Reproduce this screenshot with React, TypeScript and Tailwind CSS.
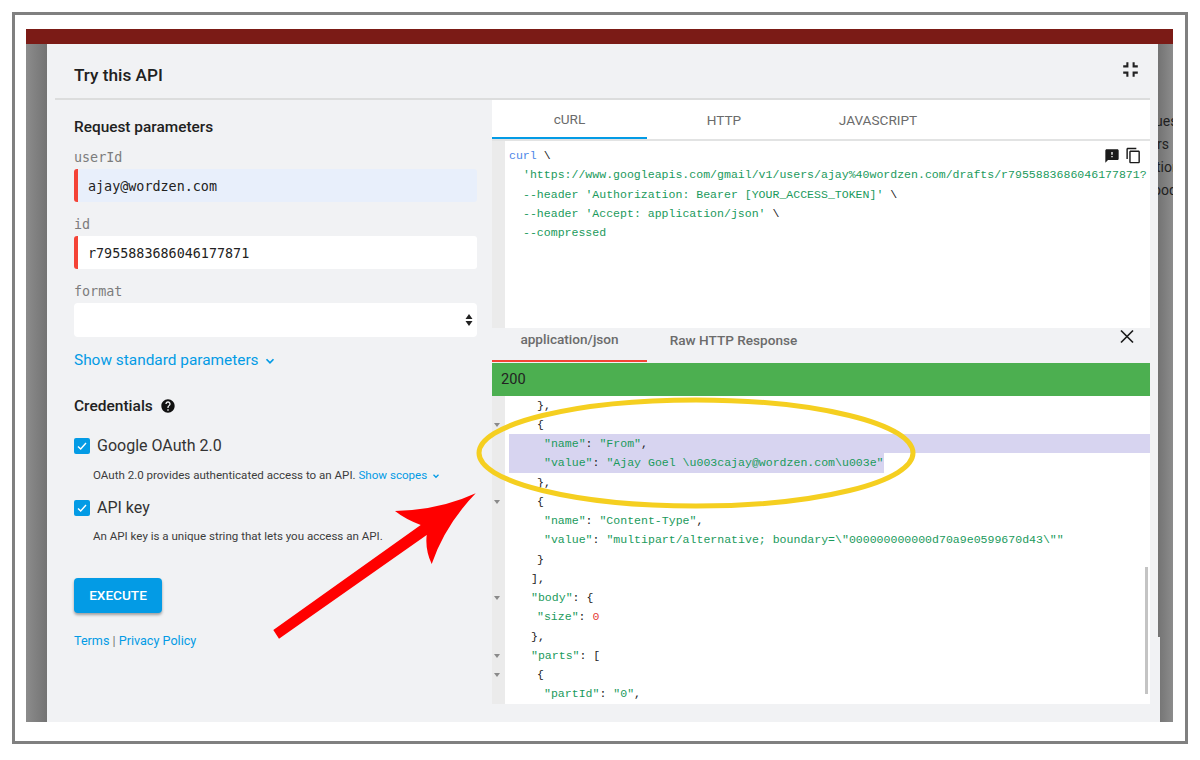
import React from "react";

const mono = "font-['Liberation_Mono',monospace]";
const sansMono = "font-['DejaVu_Sans_Mono',monospace]";

type Tok = { t: string; c?: string };
const G = "text-[#1a9a5c]";
const K = "text-[#222222]";

function CodeLine({ pl, toks, fold }: { pl: string; toks: Tok[]; fold?: boolean }) {
  return (
    <div className={`relative h-[19.25px] leading-[19.25px] whitespace-pre ${pl}`}>
      {fold && <span className="absolute left-[2px] top-[8px] h-0 w-0 border-x-[3px] border-t-[4px] border-x-transparent border-t-[#8a8a8a]" />}
      {toks.map((x, i) => (
        <span key={i} className={x.c ?? K}>{x.t}</span>
      ))}
    </div>
  );
}

function Field({ label, value, tint, marker }: { label: string; value?: string; tint?: boolean; marker?: boolean }) {
  return (
    <div className="mb-[10px]">
      <div className={`${sansMono} h-[24px] pt-[2px] text-[13.4px] leading-[22px] text-[#7c7c7c]`}>{label}</div>
      <div className={`flex h-[33px] w-[403px] items-center rounded-[3px] pt-[4px] ${tint ? "bg-[#e8effb]" : "bg-white"} ${marker ? "border-l-4 border-[#f44336]" : ""} ${sansMono} pl-[10px] text-[13.4px] text-[#222222]`}>
        {value}
      </div>
    </div>
  );
}

function Check({ label }: { label: string }) {
  return (
    <div className="flex h-[18px] items-center">
      <span className="flex h-[16px] w-[16px] items-center justify-center rounded-[2px] bg-[#039be5]">
        <svg width="12" height="12" viewBox="0 0 12 12" fill="none" stroke="#ffffff" strokeWidth="1.4">
          <path d="M2 6.4 L4.7 9 L10 3" />
        </svg>
      </span>
      <span className="ml-[7px] text-[16px] text-[#333333]">{label}</span>
    </div>
  );
}

const Chevron = ({ size }: { size: number }) => (
  <svg width={size} height={size} viewBox="0 0 12 12" fill="none" stroke="#039be5" strokeWidth="1.5">
    <path d="M3 4.5 L6 7.5 L9 4.5" />
  </svg>
);

export default function App() {
  return (
    <div className="relative h-[760px] w-[1200px] overflow-hidden bg-white px-3 pt-3 font-['Roboto',sans-serif]">
      <div className="h-[732px] w-[1176px] border-[3px] border-[#808080] px-[11px] pt-[14px]">
        <div className="flex h-[693px] w-[1147px] flex-col">
          <div className="h-[15px] bg-[#7b1b16]" />
          <div className="flex h-[678px]">
            <div className="w-[21px] bg-gradient-to-r from-[#8c8c8c] to-[#737373]" />
            <div className="w-[1111px] bg-[#f1f2f4] px-2">
              <div className="flex h-[56px] justify-between border-b-2 border-[#dcdddd]">
                <div className="pl-[19px] pt-[20px] text-[17.2px] leading-[22px] font-medium text-[#212121]">Try this API</div>
                <svg className="mr-[7px] mt-[13px]" width="25" height="25" viewBox="0 0 24 24" fill="#222222">
                  <path d="M5 16h3v3h2v-5H5v2zm3-8H5v2h5V5H8v3zm6 11h2v-3h3v-2h-5v5zm2-11V5h-2v5h5V8h-3z" />
                </svg>
              </div>
              <div className="flex">
                <div className="w-[437px] pl-[19px]">
                  <div className="h-[45px] pt-[17px] text-[15.4px] leading-[20px] font-medium text-[#212121]">Request parameters</div>
                  <div>
                    <Field label="userId" value="ajay@wordzen.com" tint marker />
                    <Field label="id" value="r7955883686046177871" marker />
                    <div className="mb-[12px]">
                      <div className={`${sansMono} h-[24px] pt-[2px] text-[13.4px] leading-[22px] text-[#7c7c7c]`}>format</div>
                      <div className="flex h-[34px] w-[403px] items-center justify-end rounded-[4px] bg-white pr-[4px]">
                        <svg width="8" height="14" viewBox="0 0 8 14" fill="#222222">
                          <path d="M4 1 L7.5 6 L0.5 6 Z M4 13 L0.5 8 L7.5 8 Z" />
                        </svg>
                      </div>
                    </div>
                  </div>
                  <div className="flex h-[24px] items-center text-[15.4px] text-[#039be5]">
                    Show standard parameters
                    <span className="ml-[4px]"><Chevron size={14} /></span>
                  </div>
                  <div className="mt-[22px] flex h-[24px] items-center text-[15.5px] font-medium text-[#212121]">
                    Credentials
                    <svg className="ml-[7px] -mt-[3px]" width="16" height="16" viewBox="0 0 24 24" fill="#111111">
                      <path d="M12 2C6.48 2 2 6.48 2 12s4.48 10 10 10 10-4.48 10-10S17.52 2 12 2zm1 17h-2v-2h2v2zm2.07-7.75l-.9.92C13.45 12.9 13 13.5 13 15h-2v-.5c0-1.1.45-2.1 1.17-2.83l1.24-1.26c.37-.36.59-.86.59-1.41 0-1.1-.9-2-2-2s-2 .9-2 2H8c0-2.21 1.79-4 4-4s4 1.79 4 4c0 .88-.36 1.68-.93 2.25z" />
                    </svg>
                  </div>
                  <div className="mt-[18px]"><Check label="Google OAuth 2.0" /></div>
                  <div className="mt-[12px] flex h-[18px] items-center pl-[19px] text-[11.55px] text-[#3c3c3c]">
                    OAuth 2.0 provides authenticated access to an API.&nbsp;
                    <span className="text-[11.6px] text-[#039be5]">Show scopes</span>
                    <span className="ml-[4px]"><Chevron size={10} /></span>
                  </div>
                  <div className="mt-[14px]"><Check label="API key" /></div>
                  <div className="mt-[11px] flex h-[18px] items-center pl-[19px] text-[11.55px] text-[#3c3c3c]">
                    An API key is a unique string that lets you access an API.
                  </div>
                  <button className="mt-[32px] block h-[35px] w-[88px] rounded-[4px] bg-[#039be5] text-[13.6px] font-medium text-white shadow-[0_2px_3px_rgba(0,0,0,0.35)]">
                    EXECUTE
                  </button>
                  <div className="mt-[19px] text-[12.6px] leading-[18px] text-[#039be5]">
                    Terms <span className="text-[#777777]">|</span> Privacy Policy
                  </div>
                </div>
                <div className="w-[658px]">
                  <div className="flex h-[39px] bg-white pt-[1px] text-[13.6px] text-[#6b6b6b]">
                    <div className="flex w-[155px] items-center justify-center border-b-2 border-[#039be5]">cURL</div>
                    <div className="flex w-[154px] items-center justify-center">HTTP</div>
                    <div className="flex w-[154px] items-center justify-center">JAVASCRIPT</div>
                  </div>
                  <div className="h-[2px] bg-[#e2e3e3]" />
                  <div className={`relative flex h-[187px] bg-white ${mono} text-[11.55px]`}>
                    <div className="w-[13px] shrink-0 bg-[#ebebeb]" />
                    <div className="min-w-0 flex-1 overflow-hidden pl-[4px] pt-[5px]">
                      <CodeLine pl="pl-0" toks={[{ t: "curl", c: "text-[#4a86e8]" }, { t: " \\" }]} />
                      <CodeLine pl="pl-[14px]" toks={[{ t: "'https://www.googleapis.com/gmail/v1/users/ajay%40wordzen.com/drafts/r7955883686046177871?", c: G }]} />
                      <CodeLine pl="pl-[14px]" toks={[{ t: "--header ", c: G }, { t: "'Authorization: Bearer [YOUR_ACCESS_TOKEN]'", c: G }, { t: " \\" }]} />
                      <CodeLine pl="pl-[14px]" toks={[{ t: "--header ", c: G }, { t: "'Accept: application/json'", c: G }, { t: " \\" }]} />
                      <CodeLine pl="pl-[14px]" toks={[{ t: "--compressed", c: G }]} />
                    </div>
                    <div className="absolute right-[8px] top-[6px] flex items-center gap-[5px]">
                      <svg width="16" height="16" viewBox="0 0 24 24" fill="#1a1a1a">
                        <path d="M20 2H4c-1.1 0-1.99.9-1.99 2L2 22l4-4h14c1.1 0 2-.9 2-2V4c0-1.1-.9-2-2-2zm-7 12h-2v-2h2v2zm0-4h-2V6h2v4z" />
                      </svg>
                      <svg width="17" height="17" viewBox="0 0 24 24" fill="#1a1a1a">
                        <path d="M16 1H4c-1.1 0-2 .9-2 2v14h2V3h12V1zm3 4H8c-1.1 0-2 .9-2 2v14c0 1.1.9 2 2 2h11c1.1 0 2-.9 2-2V7c0-1.1-.9-2-2-2zm0 16H8V7h11v14z" />
                      </svg>
                    </div>
                  </div>
                  <div className="relative flex h-[34px] bg-[#f1f2f4] text-[13.6px] font-medium text-[#6b6b6b]">
                    <div className="flex w-[155px] items-center justify-center border-b-2 border-[#f44336] pb-[9px]">application/json</div>
                    <div className="flex w-[173px] items-center justify-center pb-[9px]">Raw HTTP Response</div>
                    <svg className="absolute right-[13px] -top-[1px]" width="20" height="20" viewBox="0 0 20 20" fill="none" stroke="#1c1c1c" strokeWidth="1.7">
                      <path d="M4 3.5 L16 15.5 M16 3.5 L4 15.5" />
                    </svg>
                  </div>
                  <div className="mt-px flex h-[33px] items-center bg-[#4caf50] pl-[9px] text-[14.6px] text-[#222222]">200</div>
                  <div className={`relative flex h-[308px] overflow-hidden bg-white ${mono} text-[11.55px]`}>
                    <div className="w-[13px] shrink-0 bg-[#ebebeb]" />
                    <div className="absolute left-0 -top-[0.5px] w-full">
                      <CodeLine pl="pl-[45px]" toks={[{ t: "}," }]} />
                      <CodeLine pl="pl-[45px]" fold toks={[{ t: "{" }]} />
                      <div className="ml-[17px] h-[19.25px] bg-[#d7d4f0] pl-[35px] leading-[19.25px] whitespace-pre">
                        <span className={G}>"name"</span><span className={K}>: </span><span className={G}>"From"</span><span className={K}>,</span>
                      </div>
                      <div className="ml-[17px] h-[19.25px] w-[375px] bg-[#d7d4f0] pl-[35px] leading-[19.25px] whitespace-pre">
                        <span className={G}>"value"</span><span className={K}>: </span><span className={G}>"Ajay Goel \u003cajay@wordzen.com\u003e"</span>
                      </div>
                      <CodeLine pl="pl-[45px]" toks={[{ t: "}," }]} />
                      <CodeLine pl="pl-[45px]" fold toks={[{ t: "{" }]} />
                      <CodeLine pl="pl-[52px]" toks={[{ t: '"name"', c: G }, { t: ": " }, { t: '"Content-Type"', c: G }, { t: "," }]} />
                      <CodeLine pl="pl-[52px]" toks={[{ t: '"value"', c: G }, { t: ": " }, { t: '"multipart/alternative; boundary=\\"000000000000d70a9e0599670d43\\""', c: G }]} />
                      <CodeLine pl="pl-[45px]" toks={[{ t: "}" }]} />
                      <CodeLine pl="pl-[39px]" toks={[{ t: "]," }]} />
                      <CodeLine pl="pl-[39px]" fold toks={[{ t: '"body"', c: G }, { t: ": {" }]} />
                      <CodeLine pl="pl-[45px]" toks={[{ t: '"size"', c: G }, { t: ": " }, { t: "0", c: "text-[#e53935]" }]} />
                      <CodeLine pl="pl-[39px]" toks={[{ t: "}," }]} />
                      <CodeLine pl="pl-[39px]" fold toks={[{ t: '"parts"', c: G }, { t: ": [" }]} />
                      <CodeLine pl="pl-[45px]" fold toks={[{ t: "{" }]} />
                      <CodeLine pl="pl-[52px]" toks={[{ t: '"partId"', c: G }, { t: ": " }, { t: '"0"', c: G }, { t: "," }]} />
                    </div>
                    <div className="absolute right-[2px] top-[171px] h-[127px] w-[3px] bg-[#c4c4c4]" />
                  </div>
                </div>
              </div>
            </div>
            <div className="w-[15px] overflow-hidden bg-gradient-to-r from-[#737373] to-[#8c8c8c] pt-[66px] text-[14px] leading-[23px] whitespace-nowrap text-[#1f1f1f]">
              <div className="-ml-[3px]">ues</div>
              <div className="-ml-[1px]">rs</div>
              <div className="-ml-[2px]">tion</div>
              <div className="-ml-[5px]">ood</div>
              <div className="mt-[435px] h-[85px] w-[2px] bg-[#f1f2f4]" />
            </div>
          </div>
        </div>
      </div>
      <svg className="pointer-events-none absolute left-0 top-0" width="1200" height="760" viewBox="0 0 1200 760">
        <ellipse cx="696" cy="453" rx="217" ry="53" fill="none" stroke="#f5cf20" strokeWidth="5" />
        <path d="M273.3 630 L420.7 525 Q405 519 395 511 Q440 510 475.7 493.3 Q445 525 431.7 564 Q425 550 426.7 535 L279 638.7 Z" fill="#ff0000" />
      </svg>
    </div>
  );
}
